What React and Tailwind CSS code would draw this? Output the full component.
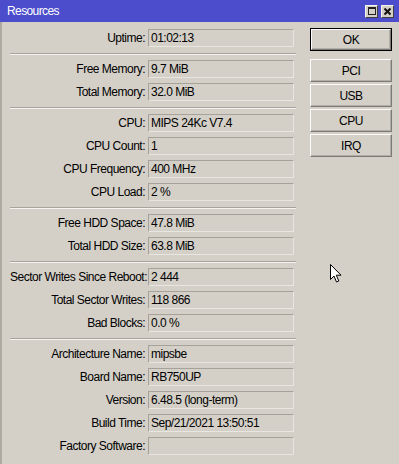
import React from 'react'

const GROUPS = [
  [['Uptime', '01:02:13']],
  [['Free Memory', '9.7 MiB'], ['Total Memory', '32.0 MiB']],
  [['CPU', 'MIPS 24Kc V7.4'], ['CPU Count', '1'], ['CPU Frequency', '400 MHz'], ['CPU Load', '2 %']],
  [['Free HDD Space', '47.8 MiB'], ['Total HDD Size', '63.8 MiB']],
  [['Sector Writes Since Reboot', '2 444'], ['Total Sector Writes', '118 866'], ['Bad Blocks', '0.0 %']],
  [['Architecture Name', 'mipsbe'], ['Board Name', 'RB750UP'], ['Version', '6.48.5 (long-term)'], ['Build Time', 'Sep/21/2021 13:50:51'], ['Factory Software', '']],
]

function Row({ label, value }) {
  return (
    <div className="flex items-center h-[18px] shrink-0">
      <div className="w-[138px] text-right pr-[3px] whitespace-nowrap">{label}:</div>
      <div className="w-[146px] h-[18px] border border-[#a5a29b] border-b-[#e8e6e1] border-r-[#e8e6e1] px-[2px] leading-[16px] whitespace-nowrap overflow-hidden">
        {value}
      </div>
    </div>
  )
}

function Separator() {
  return (
    <div className="w-[286px] pt-[1px] shrink-0">
      <div className="h-px bg-[#a7a49d]" />
      <div className="h-px bg-[#f4f3f0]" />
    </div>
  )
}

function WinButton({ children, primary }) {
  const inner = (
    <div className="h-full border border-[#fbfbfa] border-b-[#7c7a75] border-r-[#7c7a75] shadow-[inset_-1px_-1px_0_#b1aea7] flex items-center justify-center">
      {children}
    </div>
  )
  if (primary) {
    return <div className="h-[23px] w-[82px] border border-black">{inner}</div>
  }
  return <div className="h-[23px] w-[82px]">{inner}</div>
}

function TitleButton({ children }) {
  return (
    <div className="w-[13px] h-[13px] bg-[#d4d0c8] border border-[#f4f3f0] border-b-[#404040] border-r-[#404040] flex items-center justify-center">
      {children}
    </div>
  )
}

export default function App() {
  return (
    <div
      className="w-[399px] h-[464px] overflow-hidden bg-[#d4d0c8] text-[12px] tracking-[-0.5px] text-black relative"
      style={{ fontFamily: '"Liberation Sans", Arial, sans-serif' }}
    >
      <div className="h-[22px] bg-[#4b4dcc] flex items-center justify-between pl-[7px] pr-[5px]">
        <span className="text-white text-[12px] tracking-[-0.6px]">Resources</span>
        <div className="flex gap-[3px]">
          <TitleButton>
            <div className="w-[8px] h-[8px] border border-[#222] border-t-2" />
          </TitleButton>
          <TitleButton>
            <svg width="9" height="9" viewBox="0 0 9 9">
              <path d="M1.5 1.5 L7.5 7.5 M7.5 1.5 L1.5 7.5" stroke="#111" strokeWidth="2" />
            </svg>
          </TitleButton>
        </div>
      </div>

      <div className="flex h-[442px] border-l-2 border-[#aeaaa2]">
        <div className="pl-[8px] pt-[7px] flex flex-col gap-[5px]">
          {GROUPS.map((group, i) => (
            <React.Fragment key={i}>
              {i > 0 && <Separator />}
              {group.map(([label, value]) => (
                <Row key={label} label={label} value={value} />
              ))}
            </React.Fragment>
          ))}
        </div>

        <div className="ml-[14px] pt-[6px] flex flex-col">
          <WinButton primary>OK</WinButton>
          <div className="mt-[8px] flex flex-col gap-[2px]">
            <WinButton>PCI</WinButton>
            <WinButton>USB</WinButton>
            <WinButton>CPU</WinButton>
            <WinButton>IRQ</WinButton>
          </div>
        </div>
      </div>

      {/* mouse pointer */}
      <svg className="absolute left-[330px] top-[264px]" width="13" height="20" viewBox="0 0 13 20">
        <path
          d="M0.5 0.5 L0.5 15.5 L4 12 L6.5 18 L8.8 17 L6.3 11.2 L11 11.2 Z"
          fill="#fff"
          stroke="#000"
          strokeWidth="1"
          strokeLinejoin="miter"
        />
      </svg>
    </div>
  )
}
